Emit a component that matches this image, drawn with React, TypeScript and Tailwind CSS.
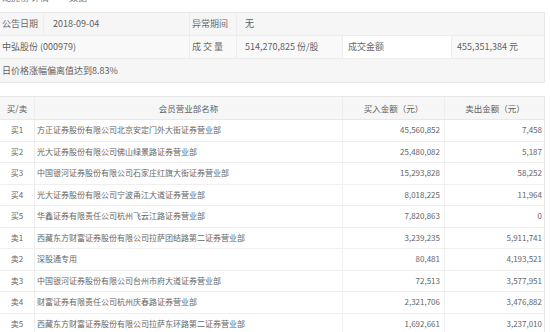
import React from 'react';

const rows = [
  ['买1', '方正证券股份有限公司北京安定门外大街证券营业部', '45,560,852', '7,458'],
  ['买2', '光大证券股份有限公司佛山绿景路证券营业部', '25,480,082', '5,187'],
  ['买3', '中国银河证券股份有限公司石家庄红旗大街证券营业部', '15,293,828', '58,252'],
  ['买4', '光大证券股份有限公司宁波甬江大道证券营业部', '8,018,225', '11,964'],
  ['买5', '华鑫证券有限责任公司杭州飞云江路证券营业部', '7,820,863', '0'],
  ['卖1', '西藏东方财富证券股份有限公司拉萨团结路第二证券营业部', '3,239,235', '5,911,741'],
  ['卖2', '深股通专用', '80,481', '4,193,521'],
  ['卖3', '中国银河证券股份有限公司台州市府大道证券营业部', '72,513', '3,577,951'],
  ['卖4', '财富证券有限责任公司杭州庆春路证券营业部', '2,321,706', '3,476,882'],
  ['卖5', '西藏东方财富证券股份有限公司拉萨东环路第二证券营业部', '1,692,661', '3,237,010'],
];

const App = () => {
  return (
    <div className="w-[550px] h-[332px] overflow-hidden bg-white text-[#5f5f5f] font-['Noto_Sans_CJK_SC','Microsoft_YaHei',sans-serif]">
      {/* tail of the line above, cut off by the screenshot */}
      <div className="h-[12px]">
        <div className="h-[4px] overflow-hidden">
          <div className="-mt-[9px] h-[13px] leading-[13px] text-[9px] pl-[2px] text-[#777]">龙虎榜 详情　　 数据 ·</div>
        </div>
      </div>

      {/* summary table */}
      <div className="w-[545px] border-t border-r border-[#e8e8e8] text-[9px]">
        <div className="grid grid-cols-[44px_146px_47px_106px_109px_93px] h-[23px] bg-[#f6f6f6] border-b border-[#ededed]">
          <div className="flex items-center pl-[2px] border-r border-[#ededed] text-[#6a6a6a]">公告日期</div>
          <div className="flex items-center pl-[9px] border-r border-[#ededed]">2018-09-04</div>
          <div className="flex items-center pl-[2px] border-r border-[#ededed] text-[#6a6a6a]">异常期间</div>
          <div className="col-span-3 flex items-center pl-[8px]">无</div>
        </div>
        <div className="grid grid-cols-[44px_146px_47px_106px_109px_93px] h-[23px] bg-[#f9f9f9] border-b border-[#ededed]">
          <div className="col-span-2 flex items-center pl-[2px] border-r border-[#ededed]">中弘股份 (000979)</div>
          <div className="flex items-center pl-[2px] border-r border-[#ededed] text-[#6a6a6a] tracking-[2px]">成交量</div>
          <div className="flex items-center pl-[8px] border-r border-[#ededed]">514,270,825 份/股</div>
          <div className="flex items-center pl-[5px] border-r border-[#ededed] bg-white text-[#6a6a6a]">成交金额</div>
          <div className="flex items-center pl-[5px]">455,351,384 元</div>
        </div>
        <div className="h-[24px] flex items-center pl-[2px] bg-[#f6f6f6] border-b border-[#e8e8e8]">
          日价格涨幅偏离值达到8.83%
        </div>
      </div>

      {/* trade detail table */}
      <div className="mt-[13px] w-[545px] border-t border-r border-[#e8e8e8] text-[8px] text-[#666]">
        <div className="grid grid-cols-[35px_308px_102px_100px] h-[23px] bg-[#f6f6f6] border-b border-[#e8e8e8] text-[8.5px] text-[#5f5f5f]">
          <div className="flex items-center justify-center border-r border-[#ededed]">买/卖</div>
          <div className="flex items-center justify-center border-r border-[#ededed]">会员营业部名称</div>
          <div className="flex items-center justify-center border-r border-[#ededed]">买入金额（元）</div>
          <div className="flex items-center justify-center">卖出金额（元）</div>
        </div>
        {rows.map((r) => (
          <div key={r[0]} className="grid grid-cols-[35px_308px_102px_100px] h-[21.5px] border-b border-[#efefef]">
            <div className="flex items-center justify-center border-r border-[#efefef]">{r[0]}</div>
            <div className="flex items-center pl-[2px] border-r border-[#efefef]">{r[1]}</div>
            <div className="flex items-center justify-end pr-[4px] border-r border-[#efefef]">{r[2]}</div>
            <div className="flex items-center justify-end pr-[3px]">{r[3]}</div>
          </div>
        ))}
      </div>
    </div>
  );
};

export default App;
